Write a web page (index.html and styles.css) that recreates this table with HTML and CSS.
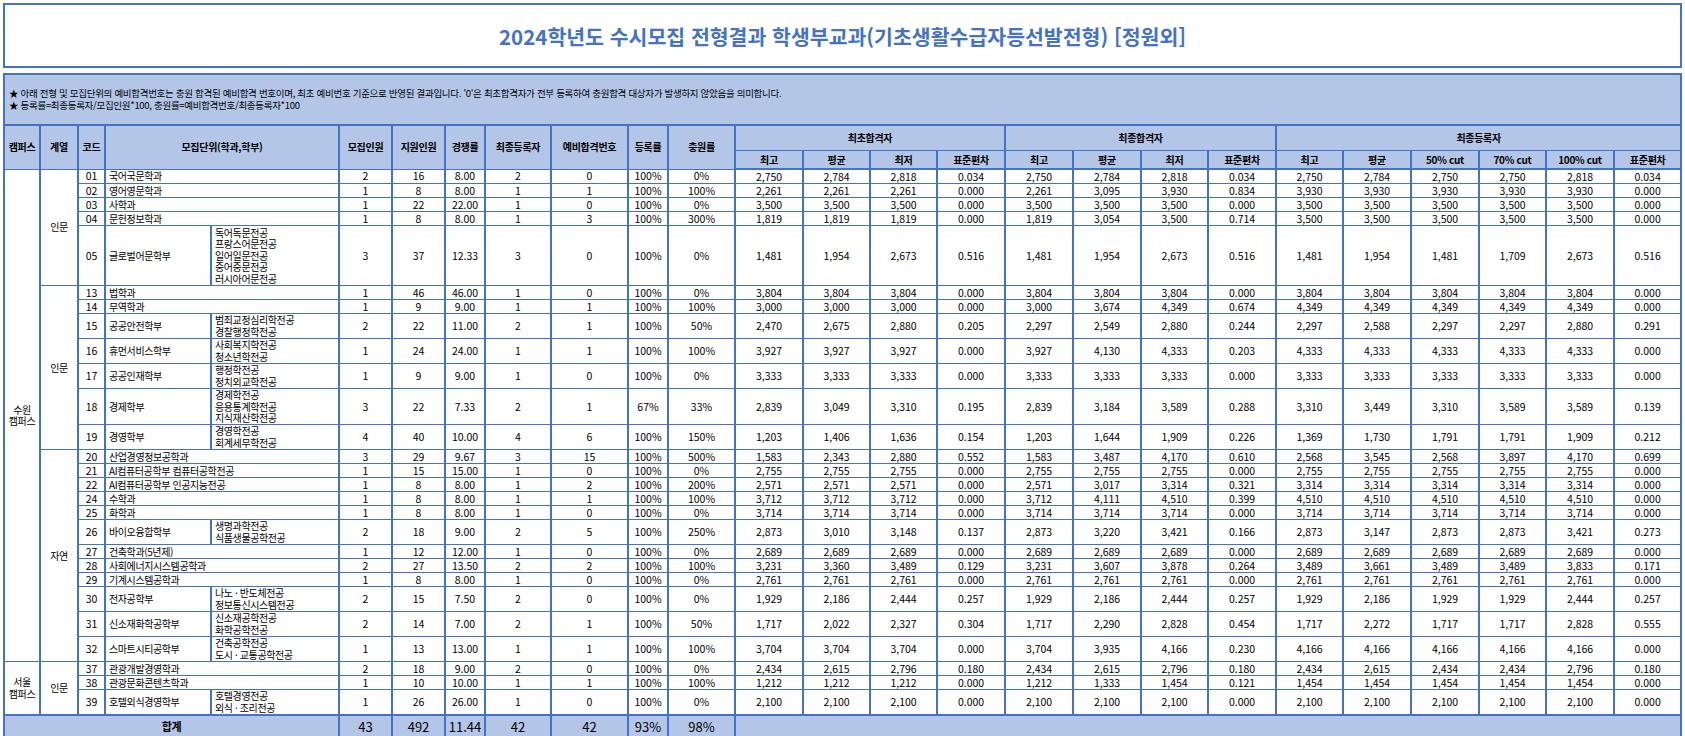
FILE: index.html
```html
<!DOCTYPE html>
<html lang="ko">
<head>
<meta charset="utf-8">
<title>2024학년도 수시모집 전형결과</title>
<link rel="stylesheet" href="styles.css">
</head>
<body>
<div class="title">2024학년도 수시모집 전형결과 학생부교과(기초생활수급자등선발전형) [정원외]</div>
<table class="grid">
<colgroup>
<col class="w36"><col class="w38"><col class="w27"><col class="w106"><col class="w128"><col class="w53"><col class="w53"><col class="w40"><col class="w66"><col class="w77"><col class="w40"><col class="w67">
<col class="w68"><col class="w67"><col class="w67"><col class="w68">
<col class="w68"><col class="w68"><col class="w67"><col class="w68">
<col class="w67"><col class="w68"><col class="w68"><col class="w67"><col class="w68"><col class="w67">
</colgroup>
<tr class="notes"><td colspan="26">★ 아래 전형 및 모집단위의 예비합격번호는 충원 합격된 예비합격 번호이며, 최초 예비번호 기준으로 반영된 결과입니다. '0'은 최초합격자가 전부 등록하여 충원합격 대상자가 발생하지 않았음을 의미합니다.<br>★ 등록률=최종등록자/모집인원*100, 충원률=예비합격번호/최종등록자*100</td></tr>
<tr class="h1">
<th rowspan="2">캠퍼스</th><th rowspan="2">계열</th><th rowspan="2">코드</th><th rowspan="2" colspan="2">모집단위(학과,학부)</th><th rowspan="2">모집인원</th><th rowspan="2">지원인원</th><th rowspan="2">경쟁률</th><th rowspan="2">최종등록자</th><th rowspan="2">예비합격번호</th><th rowspan="2">등록률</th><th rowspan="2">충원률</th>
<th colspan="4">최초합격자</th><th colspan="4">최종합격자</th><th colspan="6">최종등록자</th>
</tr>
<tr class="h2">
<th>최고</th><th>평균</th><th>최저</th><th>표준편차</th>
<th>최고</th><th>평균</th><th>최저</th><th>표준편차</th>
<th>최고</th><th>평균</th><th>50% cut</th><th>70% cut</th><th>100% cut</th><th>표준편차</th>
</tr>
<tr class="r1"><td class="k" rowspan="24">수원<br>캠퍼스</td><td class="k" rowspan="5">인문</td><td>01</td><td class="l" colspan="2">국어국문학과</td><td>2</td><td>16</td><td>8.00</td><td>2</td><td>0</td><td>100%</td><td>0%</td><td>2,750</td><td>2,784</td><td>2,818</td><td>0.034</td><td>2,750</td><td>2,784</td><td>2,818</td><td>0.034</td><td>2,750</td><td>2,784</td><td>2,750</td><td>2,750</td><td>2,818</td><td>0.034</td></tr>
<tr class="r1"><td>02</td><td class="l" colspan="2">영어영문학과</td><td>1</td><td>8</td><td>8.00</td><td>1</td><td>1</td><td>100%</td><td>100%</td><td>2,261</td><td>2,261</td><td>2,261</td><td>0.000</td><td>2,261</td><td>3,095</td><td>3,930</td><td>0.834</td><td>3,930</td><td>3,930</td><td>3,930</td><td>3,930</td><td>3,930</td><td>0.000</td></tr>
<tr class="r1"><td>03</td><td class="l" colspan="2">사학과</td><td>1</td><td>22</td><td>22.00</td><td>1</td><td>0</td><td>100%</td><td>0%</td><td>3,500</td><td>3,500</td><td>3,500</td><td>0.000</td><td>3,500</td><td>3,500</td><td>3,500</td><td>0.000</td><td>3,500</td><td>3,500</td><td>3,500</td><td>3,500</td><td>3,500</td><td>0.000</td></tr>
<tr class="r1"><td>04</td><td class="l" colspan="2">문헌정보학과</td><td>1</td><td>8</td><td>8.00</td><td>1</td><td>3</td><td>100%</td><td>300%</td><td>1,819</td><td>1,819</td><td>1,819</td><td>0.000</td><td>1,819</td><td>3,054</td><td>3,500</td><td>0.714</td><td>3,500</td><td>3,500</td><td>3,500</td><td>3,500</td><td>3,500</td><td>0.000</td></tr>
<tr class="r5"><td>05</td><td class="l">글로벌어문학부</td><td class="l">독어독문전공<br>프랑스어문전공<br>일어일문전공<br>중어중문전공<br>러시아어문전공</td><td>3</td><td>37</td><td>12.33</td><td>3</td><td>0</td><td>100%</td><td>0%</td><td>1,481</td><td>1,954</td><td>2,673</td><td>0.516</td><td>1,481</td><td>1,954</td><td>2,673</td><td>0.516</td><td>1,481</td><td>1,954</td><td>1,481</td><td>1,709</td><td>2,673</td><td>0.516</td></tr>
<tr class="r1"><td class="k" rowspan="7">인문</td><td>13</td><td class="l" colspan="2">법학과</td><td>1</td><td>46</td><td>46.00</td><td>1</td><td>0</td><td>100%</td><td>0%</td><td>3,804</td><td>3,804</td><td>3,804</td><td>0.000</td><td>3,804</td><td>3,804</td><td>3,804</td><td>0.000</td><td>3,804</td><td>3,804</td><td>3,804</td><td>3,804</td><td>3,804</td><td>0.000</td></tr>
<tr class="r1"><td>14</td><td class="l" colspan="2">무역학과</td><td>1</td><td>9</td><td>9.00</td><td>1</td><td>1</td><td>100%</td><td>100%</td><td>3,000</td><td>3,000</td><td>3,000</td><td>0.000</td><td>3,000</td><td>3,674</td><td>4,349</td><td>0.674</td><td>4,349</td><td>4,349</td><td>4,349</td><td>4,349</td><td>4,349</td><td>0.000</td></tr>
<tr class="r2"><td>15</td><td class="l">공공안전학부</td><td class="l">범죄교정심리학전공<br>경찰행정학전공</td><td>2</td><td>22</td><td>11.00</td><td>2</td><td>1</td><td>100%</td><td>50%</td><td>2,470</td><td>2,675</td><td>2,880</td><td>0.205</td><td>2,297</td><td>2,549</td><td>2,880</td><td>0.244</td><td>2,297</td><td>2,588</td><td>2,297</td><td>2,297</td><td>2,880</td><td>0.291</td></tr>
<tr class="r2"><td>16</td><td class="l">휴먼서비스학부</td><td class="l">사회복지학전공<br>청소년학전공</td><td>1</td><td>24</td><td>24.00</td><td>1</td><td>1</td><td>100%</td><td>100%</td><td>3,927</td><td>3,927</td><td>3,927</td><td>0.000</td><td>3,927</td><td>4,130</td><td>4,333</td><td>0.203</td><td>4,333</td><td>4,333</td><td>4,333</td><td>4,333</td><td>4,333</td><td>0.000</td></tr>
<tr class="r2"><td>17</td><td class="l">공공인재학부</td><td class="l">행정학전공<br>정치외교학전공</td><td>1</td><td>9</td><td>9.00</td><td>1</td><td>0</td><td>100%</td><td>0%</td><td>3,333</td><td>3,333</td><td>3,333</td><td>0.000</td><td>3,333</td><td>3,333</td><td>3,333</td><td>0.000</td><td>3,333</td><td>3,333</td><td>3,333</td><td>3,333</td><td>3,333</td><td>0.000</td></tr>
<tr class="r3"><td>18</td><td class="l">경제학부</td><td class="l">경제학전공<br>응용통계학전공<br>지식재산학전공</td><td>3</td><td>22</td><td>7.33</td><td>2</td><td>1</td><td>67%</td><td>33%</td><td>2,839</td><td>3,049</td><td>3,310</td><td>0.195</td><td>2,839</td><td>3,184</td><td>3,589</td><td>0.288</td><td>3,310</td><td>3,449</td><td>3,310</td><td>3,589</td><td>3,589</td><td>0.139</td></tr>
<tr class="r2"><td>19</td><td class="l">경영학부</td><td class="l">경영학전공<br>회계세무학전공</td><td>4</td><td>40</td><td>10.00</td><td>4</td><td>6</td><td>100%</td><td>150%</td><td>1,203</td><td>1,406</td><td>1,636</td><td>0.154</td><td>1,203</td><td>1,644</td><td>1,909</td><td>0.226</td><td>1,369</td><td>1,730</td><td>1,791</td><td>1,791</td><td>1,909</td><td>0.212</td></tr>
<tr class="r1"><td class="k" rowspan="12">자연</td><td>20</td><td class="l" colspan="2">산업경영정보공학과</td><td>3</td><td>29</td><td>9.67</td><td>3</td><td>15</td><td>100%</td><td>500%</td><td>1,583</td><td>2,343</td><td>2,880</td><td>0.552</td><td>1,583</td><td>3,487</td><td>4,170</td><td>0.610</td><td>2,568</td><td>3,545</td><td>2,568</td><td>3,897</td><td>4,170</td><td>0.699</td></tr>
<tr class="r1"><td>21</td><td class="l" colspan="2">AI컴퓨터공학부 컴퓨터공학전공</td><td>1</td><td>15</td><td>15.00</td><td>1</td><td>0</td><td>100%</td><td>0%</td><td>2,755</td><td>2,755</td><td>2,755</td><td>0.000</td><td>2,755</td><td>2,755</td><td>2,755</td><td>0.000</td><td>2,755</td><td>2,755</td><td>2,755</td><td>2,755</td><td>2,755</td><td>0.000</td></tr>
<tr class="r1"><td>22</td><td class="l" colspan="2">AI컴퓨터공학부 인공지능전공</td><td>1</td><td>8</td><td>8.00</td><td>1</td><td>2</td><td>100%</td><td>200%</td><td>2,571</td><td>2,571</td><td>2,571</td><td>0.000</td><td>2,571</td><td>3,017</td><td>3,314</td><td>0.321</td><td>3,314</td><td>3,314</td><td>3,314</td><td>3,314</td><td>3,314</td><td>0.000</td></tr>
<tr class="r1"><td>24</td><td class="l" colspan="2">수학과</td><td>1</td><td>8</td><td>8.00</td><td>1</td><td>1</td><td>100%</td><td>100%</td><td>3,712</td><td>3,712</td><td>3,712</td><td>0.000</td><td>3,712</td><td>4,111</td><td>4,510</td><td>0.399</td><td>4,510</td><td>4,510</td><td>4,510</td><td>4,510</td><td>4,510</td><td>0.000</td></tr>
<tr class="r1"><td>25</td><td class="l" colspan="2">화학과</td><td>1</td><td>8</td><td>8.00</td><td>1</td><td>0</td><td>100%</td><td>0%</td><td>3,714</td><td>3,714</td><td>3,714</td><td>0.000</td><td>3,714</td><td>3,714</td><td>3,714</td><td>0.000</td><td>3,714</td><td>3,714</td><td>3,714</td><td>3,714</td><td>3,714</td><td>0.000</td></tr>
<tr class="r2"><td>26</td><td class="l">바이오융합학부</td><td class="l">생명과학전공<br>식품생물공학전공</td><td>2</td><td>18</td><td>9.00</td><td>2</td><td>5</td><td>100%</td><td>250%</td><td>2,873</td><td>3,010</td><td>3,148</td><td>0.137</td><td>2,873</td><td>3,220</td><td>3,421</td><td>0.166</td><td>2,873</td><td>3,147</td><td>2,873</td><td>2,873</td><td>3,421</td><td>0.273</td></tr>
<tr class="r1"><td>27</td><td class="l" colspan="2">건축학과(5년제)</td><td>1</td><td>12</td><td>12.00</td><td>1</td><td>0</td><td>100%</td><td>0%</td><td>2,689</td><td>2,689</td><td>2,689</td><td>0.000</td><td>2,689</td><td>2,689</td><td>2,689</td><td>0.000</td><td>2,689</td><td>2,689</td><td>2,689</td><td>2,689</td><td>2,689</td><td>0.000</td></tr>
<tr class="r1"><td>28</td><td class="l" colspan="2">사회에너지시스템공학과</td><td>2</td><td>27</td><td>13.50</td><td>2</td><td>2</td><td>100%</td><td>100%</td><td>3,231</td><td>3,360</td><td>3,489</td><td>0.129</td><td>3,231</td><td>3,607</td><td>3,878</td><td>0.264</td><td>3,489</td><td>3,661</td><td>3,489</td><td>3,489</td><td>3,833</td><td>0.171</td></tr>
<tr class="r1"><td>29</td><td class="l" colspan="2">기계시스템공학과</td><td>1</td><td>8</td><td>8.00</td><td>1</td><td>0</td><td>100%</td><td>0%</td><td>2,761</td><td>2,761</td><td>2,761</td><td>0.000</td><td>2,761</td><td>2,761</td><td>2,761</td><td>0.000</td><td>2,761</td><td>2,761</td><td>2,761</td><td>2,761</td><td>2,761</td><td>0.000</td></tr>
<tr class="r2"><td>30</td><td class="l">전자공학부</td><td class="l">나노 · 반도체전공<br>정보통신시스템전공</td><td>2</td><td>15</td><td>7.50</td><td>2</td><td>0</td><td>100%</td><td>0%</td><td>1,929</td><td>2,186</td><td>2,444</td><td>0.257</td><td>1,929</td><td>2,186</td><td>2,444</td><td>0.257</td><td>1,929</td><td>2,186</td><td>1,929</td><td>1,929</td><td>2,444</td><td>0.257</td></tr>
<tr class="r2"><td>31</td><td class="l">신소재화학공학부</td><td class="l">신소재공학전공<br>화학공학전공</td><td>2</td><td>14</td><td>7.00</td><td>2</td><td>1</td><td>100%</td><td>50%</td><td>1,717</td><td>2,022</td><td>2,327</td><td>0.304</td><td>1,717</td><td>2,290</td><td>2,828</td><td>0.454</td><td>1,717</td><td>2,272</td><td>1,717</td><td>1,717</td><td>2,828</td><td>0.555</td></tr>
<tr class="r2"><td>32</td><td class="l">스마트시티공학부</td><td class="l">건축공학전공<br>도시 · 교통공학전공</td><td>1</td><td>13</td><td>13.00</td><td>1</td><td>1</td><td>100%</td><td>100%</td><td>3,704</td><td>3,704</td><td>3,704</td><td>0.000</td><td>3,704</td><td>3,935</td><td>4,166</td><td>0.230</td><td>4,166</td><td>4,166</td><td>4,166</td><td>4,166</td><td>4,166</td><td>0.000</td></tr>
<tr class="r1"><td class="k" rowspan="3">서울<br>캠퍼스</td><td class="k" rowspan="3">인문</td><td>37</td><td class="l" colspan="2">관광개발경영학과</td><td>2</td><td>18</td><td>9.00</td><td>2</td><td>0</td><td>100%</td><td>0%</td><td>2,434</td><td>2,615</td><td>2,796</td><td>0.180</td><td>2,434</td><td>2,615</td><td>2,796</td><td>0.180</td><td>2,434</td><td>2,615</td><td>2,434</td><td>2,434</td><td>2,796</td><td>0.180</td></tr>
<tr class="r1"><td>38</td><td class="l" colspan="2">관광문화콘텐츠학과</td><td>1</td><td>10</td><td>10.00</td><td>1</td><td>1</td><td>100%</td><td>100%</td><td>1,212</td><td>1,212</td><td>1,212</td><td>0.000</td><td>1,212</td><td>1,333</td><td>1,454</td><td>0.121</td><td>1,454</td><td>1,454</td><td>1,454</td><td>1,454</td><td>1,454</td><td>0.000</td></tr>
<tr class="r2"><td>39</td><td class="l">호텔외식경영학부</td><td class="l">호텔경영전공<br>외식 · 조리전공</td><td>1</td><td>26</td><td>26.00</td><td>1</td><td>0</td><td>100%</td><td>0%</td><td>2,100</td><td>2,100</td><td>2,100</td><td>0.000</td><td>2,100</td><td>2,100</td><td>2,100</td><td>0.000</td><td>2,100</td><td>2,100</td><td>2,100</td><td>2,100</td><td>2,100</td><td>0.000</td></tr>
<tr class="total"><td class="k" colspan="5">합계</td><td>43</td><td>492</td><td>11.44</td><td>42</td><td>42</td><td>93%</td><td>98%</td><td class="blank" colspan="14"></td></tr>
</table>
</body>
</html>
```
FILE: styles.css
```css
html, body {
  margin: 0;
  padding: 0;
  background: #ffffff;
}
body {
  margin: 3px 3px 0 3px;
  font-family: "Noto Sans CJK KR", "Noto Sans", sans-serif;
  color: #000000;
}
.title {
  height: 61px;
  border: 2px solid #4472c4;
  display: flex;
  align-items: center;
  justify-content: center;
  font-size: 20.5px;
  font-weight: bold;
  color: #4472c4;
  margin-bottom: 5px;
}
.grid {
  width: 1679px;
  border-collapse: collapse;
  table-layout: fixed;
  border: 2px solid #4472c4;
  background: #ffffff;
}
.grid td, .grid th {
  border-left: 2px solid #4472c4;
  border-right: 2px solid #4472c4;
  border-top: 1px solid #4472c4;
  border-bottom: 1px solid #4472c4;
  padding: 0 2px;
  font-size: 10.5px;
  line-height: 11.6px;
  text-align: center;
  vertical-align: middle;
  white-space: nowrap;
}
.grid th {
  background: #b4c6e7;
  font-weight: bold;
  font-size: 10px;
  letter-spacing: -0.3px;
}
.grid td.l, .grid td.k {
  font-size: 10px;
  letter-spacing: -0.4px;
}
.grid td.l {
  text-align: left;
  padding-left: 3px;
}
.grid .notes td {
  height: 49px;
  background: #b4c6e7;
  text-align: left;
  font-size: 9.5px;
  letter-spacing: -0.3px;
  padding-left: 4px;
  border-bottom: 2px solid #4472c4;
}
.h1 th { height: 24px; }
.h2 th { height: 17px; }
.h2 th { border-bottom: 2px solid #4472c4; }
.r1 td { height: 13px; }
.r2 td { height: 24px; }
.r3 td { height: 35px; }
.r5 td { height: 59px; }
.total td {
  height: 21px;
  background: #b4c6e7;
  font-size: 13px;
  border-top: 2px solid #4472c4;
}
.grid .total td.k {
  font-size: 11px;
  font-weight: bold;
}
.total td.blank {
  border-left: 2px solid #4472c4;
}
.w27 { width: 27px; }
.w36 { width: 36px; }
.w38 { width: 38px; }
.w40 { width: 40px; }
.w53 { width: 53px; }
.w66 { width: 66px; }
.w67 { width: 67px; }
.w68 { width: 68px; }
.w77 { width: 77px; }
.w106 { width: 106px; }
.w128 { width: 128px; }
```
